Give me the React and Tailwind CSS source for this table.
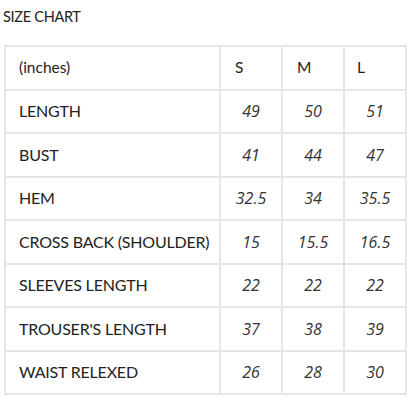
const rows = [
  ['LENGTH', '49', '50', '51'],
  ['BUST', '41', '44', '47'],
  ['HEM', '32.5', '34', '35.5'],
  ['CROSS BACK (SHOULDER)', '15', '15.5', '16.5'],
  ['SLEEVES LENGTH', '22', '22', '22'],
  ["TROUSER'S LENGTH", '37', '38', '39'],
  ['WAIST RELEXED', '26', '28', '30'],
]

export default function App() {
  return (
    <div className="w-[408px] h-[408px] bg-white text-[#222] font-['Lato',sans-serif]">
      <div className="pl-[3px] pt-[6px] h-[45px] text-[14.5px] tracking-[-0.3px]">SIZE CHART</div>
      <table className="ml-[4px] border-collapse">
        <tbody>
          <tr className="h-[43.5px]">
            <td className="w-[215px] border-2 border-[#e6e6e6] pl-[13px] text-[15.5px]">(inches)</td>
            <td className="w-[62px] border-2 border-[#e6e6e6] pl-[14px] text-[15.5px]">S</td>
            <td className="w-[62px] border-2 border-[#e6e6e6] pl-[14px] text-[15.5px]">M</td>
            <td className="w-[62px] border-2 border-[#e6e6e6] pl-[12px] text-[15.5px]">L</td>
          </tr>
          {rows.map(r => (
            <tr key={r[0]} className="h-[43.5px]">
              <td className="border-2 border-[#e6e6e6] pl-[13px] text-[16px] tracking-[-0.2px]">{r[0]}</td>
              {r.slice(1).map((v, i) => (
                <td key={i} className="border-2 border-[#e6e6e6] text-center italic text-[16px] font-['Open_Sans',sans-serif] text-[#333]">{v}</td>
              ))}
            </tr>
          ))}
        </tbody>
      </table>
    </div>
  )
}
